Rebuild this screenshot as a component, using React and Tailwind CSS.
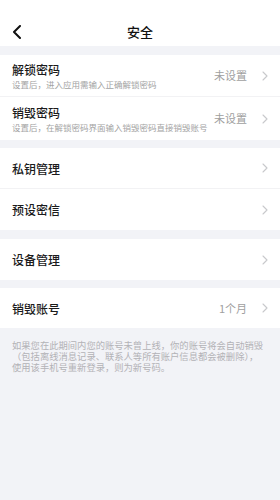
const font = { fontFamily: '"Noto Sans CJK SC", "Noto Sans", sans-serif' };

const Chevron = () => (
  <svg width="6" height="10" viewBox="0 0 6 10" className="shrink-0">
    <path d="M1 1l4 4-4 4" fill="none" stroke="#c8c9cc" strokeWidth="1.1" strokeLinecap="round" strokeLinejoin="round" />
  </svg>
);

const Row = ({ title, desc, value, h = "h-[41px]", border }) => (
  <div className={`flex items-center pl-3 pr-[12px] ${h} ${border ? "border-b border-[#f2f2f4]" : ""}`}>
    <div className="flex flex-col justify-center flex-1 min-w-0">
      <div className="text-[12px] leading-[15px] font-medium text-[#1b1b1b]">{title}</div>
      {desc && <div className="text-[8.5px] leading-[11px] mt-[2px] text-[#a3a3a3] whitespace-nowrap">{desc}</div>}
    </div>
    {value && <div className="text-[11px] text-[#a0a0a0] mr-[15px]">{value}</div>}
    <Chevron />
  </div>
);

export default function App() {
  return (
    <div className="min-h-screen bg-[#f2f3f7]" style={font}>
      <div className="bg-white h-[46px] pt-[18px]">
        <div className="relative h-[28px] flex items-center justify-center">
          <svg width="10" height="14" viewBox="0 0 10 14" className="absolute left-[12px] top-[7px]">
            <path d="M8 1L2 7l6 6" fill="none" stroke="#111" strokeWidth="2" strokeLinecap="round" strokeLinejoin="round" />
          </svg>
          <span className="text-[13px] font-medium text-[#111]">安全</span>
        </div>
      </div>

      <div className="bg-white mt-[9px]">
        <Row title="解锁密码" desc="设置后，进入应用需输入正确解锁密码" value="未设置" h="h-[42px]" border />
        <Row title="销毁密码" desc="设置后，在解锁密码界面输入销毁密码直接销毁账号" value="未设置" h="h-[43px]" />
      </div>

      <div className="bg-white mt-[8px]">
        <Row title="私钥管理" border />
        <Row title="预设密信" />
      </div>

      <div className="bg-white mt-[9px]">
        <Row title="设备管理" />
      </div>

      <div className="bg-white mt-[8px]">
        <Row title="销毁账号" value="1个月" h="h-[40px]" />
      </div>

      <div className="px-3 pt-[12px] text-[9.3px] leading-[11px] text-[#b2b2b6] whitespace-nowrap">
        <div>如果您在此期间内您的账号未曾上线，你的账号将会自动销毁</div>
        <div>（包括离线消息记录、联系人等所有账户信息都会被删除），</div>
        <div>使用该手机号重新登录，则为新号码。</div>
      </div>
    </div>
  );
}
